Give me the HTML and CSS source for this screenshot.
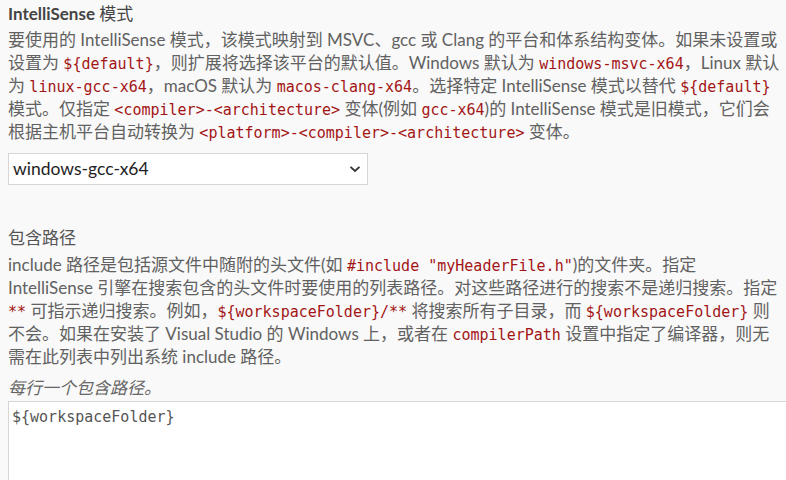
FILE: index.html
```html
<!DOCTYPE html>
<html lang="zh-CN">
<head>
<meta charset="utf-8">
<title>IntelliSense 模式</title>
<link rel="stylesheet" href="styles.css">
</head>
<body>
<main class="page">
  <section class="setting">
    <h2 class="setting-title"><span class="latin-bold">IntelliSense</span> 模式</h2>
    <p class="desc">要使用的 IntelliSense 模式，该模式映射到 MSVC、gcc 或 Clang 的平台和体系结构变体。如果未设置或<br>设置为 <code>${default}</code>，则扩展将选择该平台的默认值。Windows 默认为 <code>windows-msvc-x64</code>，Linux 默认<br>为 <code>linux-gcc-x64</code>，macOS 默认为 <code>macos-clang-x64</code>。选择特定 IntelliSense 模式以替代 <code>${default}</code><br>模式。仅指定 <code>&lt;compiler&gt;-&lt;architecture&gt;</code> 变体(例如 <code>gcc-x64</code>)的 IntelliSense 模式是旧模式，它们会<br>根据主机平台自动转换为 <code>&lt;platform&gt;-&lt;compiler&gt;-&lt;architecture&gt;</code> 变体。</p>
    <div class="select">
      <span class="select-value">windows-gcc-x64</span>
      <svg class="chevron" width="12" height="8" viewBox="0 0 12 8"><path d="M1.5 1.8 L6 6 L10.5 1.8" fill="none" stroke="#333" stroke-width="1.8"/></svg>
    </div>
  </section>

  <section class="setting second">
    <h2 class="setting-title plain">包含路径</h2>
    <p class="desc">include 路径是包括源文件中随附的头文件(如 <code>#include "myHeaderFile.h"</code>)的文件夹。指定<br>IntelliSense 引擎在搜索包含的头文件时要使用的列表路径。对这些路径进行的搜索不是递归搜索。指定<br><code>**</code> 可指示递归搜索。例如，<code>${workspaceFolder}/**</code> 将搜索所有子目录，而 <code>${workspaceFolder}</code> 则<br>不会。如果在安装了 Visual Studio 的 Windows 上，或者在 <code>compilerPath</code> 设置中指定了编译器，则无<br>需在此列表中列出系统 include 路径。</p>
    <p class="hint">每行一个包含路径。</p>
    <div class="textarea">${workspaceFolder}</div>
  </section>
</main>
</body>
</html>
```

FILE: styles.css
```css
html, body {
  margin: 0;
  padding: 0;
  background: #f9f9f9;
  overflow: hidden;
}

.page {
  padding: 2px 0 0 8px;
  font-family: "Lato", "Noto Sans CJK SC", sans-serif;
  font-size: 17px;
  line-height: 23px;
  color: #616161;
}

.setting-title {
  margin: 0 0 3px;
  font-size: 17px;
  line-height: 23px;
  font-weight: 400;
  color: #444;
}

.latin-bold {
  font-weight: 700;
}

.setting-title.plain {
  color: #555;
}

.desc {
  margin: 0;
  white-space: nowrap;
}

.desc code {
  font-family: "DejaVu Sans Mono", "Liberation Mono", monospace;
  font-size: 15px;
  line-height: 1;
  color: #a31515;
}

.select {
  margin-top: 10px;
  height: 30px;
  border: 1px solid #d6d6d6;
  background: #fff;
  display: flex;
  align-items: center;
  justify-content: space-between;
  padding: 0 6px 0 4px;
  width: 348px;
}

.select-value {
  font-size: 17.5px;
  line-height: 1;
  color: #1e1e1e;
}

.chevron {
  display: block;
}

.second {
  margin-top: 41px;
}

.second .setting-title {
  margin-bottom: 4px;
}

.hint {
  margin: 8px 0 0;
  font-style: italic;
  color: #666;
}

.textarea {
  margin-top: 2px;
  width: 800px;
  height: 90px;
  border: 1px solid #d6d6d6;
  background: #fff;
  padding: 5px 3px;
  font-family: "DejaVu Sans Mono", "Liberation Mono", monospace;
  font-size: 15px;
  line-height: 20px;
  color: #555;
}
```
